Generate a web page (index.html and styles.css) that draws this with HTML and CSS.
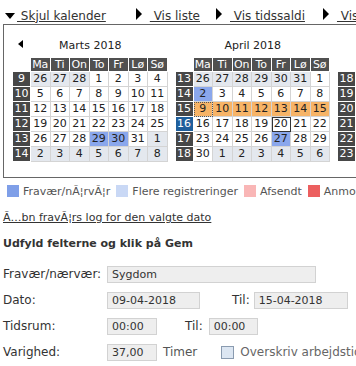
FILE: index.html
```html
<!DOCTYPE html>
<html lang="da">
<head>
<meta charset="utf-8">
<title>Kalender</title>
<link rel="stylesheet" href="styles.css">
</head>
<body>
<div class="nav">
  <div class="nav-item n1"><span class="tri-down"></span><a class="nav-link" href="#">&nbsp;Skjul kalender</a></div>
  <div class="nav-item n2"><span class="tri-right"></span><a class="nav-link" href="#">&nbsp;Vis liste</a></div>
  <div class="nav-item n3"><span class="tri-right"></span><a class="nav-link" href="#">&nbsp;Vis tidssaldi</a></div>
  <div class="nav-item"><span class="tri-right"></span><a class="nav-link" href="#">&nbsp;Vis oversigt</a></div>
</div>

<div class="calbox">
  <div class="cal">
    <div class="cal-title"><span class="tri-left"></span><span class="cal-name">Marts 2018</span><span></span></div>
    <div class="grid">
      <div class="blank"></div><div class="h">Ma</div><div class="h">Ti</div><div class="h">On</div><div class="h">To</div><div class="h">Fr</div><div class="h">Lø</div><div class="h">Sø</div>
      <div class="wk">9</div><div class="c o">26</div><div class="c o">27</div><div class="c o">28</div><div class="c">1</div><div class="c">2</div><div class="c">3</div><div class="c">4</div>
      <div class="wk">10</div><div class="c">5</div><div class="c">6</div><div class="c">7</div><div class="c">8</div><div class="c">9</div><div class="c">10</div><div class="c">11</div>
      <div class="wk">11</div><div class="c">12</div><div class="c">13</div><div class="c">14</div><div class="c">15</div><div class="c">16</div><div class="c">17</div><div class="c">18</div>
      <div class="wk">12</div><div class="c">19</div><div class="c">20</div><div class="c">21</div><div class="c">22</div><div class="c">23</div><div class="c">24</div><div class="c">25</div>
      <div class="wk">13</div><div class="c">26</div><div class="c">27</div><div class="c">28</div><div class="c s">29</div><div class="c s">30</div><div class="c">31</div><div class="c o">1</div>
      <div class="wk">14</div><div class="c o">2</div><div class="c o">3</div><div class="c o">4</div><div class="c o">5</div><div class="c o">6</div><div class="c o">7</div><div class="c o">8</div>
    </div>
  </div>

  <div class="cal">
    <div class="cal-title"><span></span><span class="cal-name">April 2018</span><span></span></div>
    <div class="grid">
      <div class="blank"></div><div class="h">Ma</div><div class="h">Ti</div><div class="h">On</div><div class="h">To</div><div class="h">Fr</div><div class="h">Lø</div><div class="h">Sø</div>
      <div class="wk">13</div><div class="c o">26</div><div class="c o">27</div><div class="c o">28</div><div class="c o">29</div><div class="c o">30</div><div class="c o">31</div><div class="c">1</div>
      <div class="wk">14</div><div class="c s">2</div><div class="c">3</div><div class="c">4</div><div class="c">5</div><div class="c">6</div><div class="c">7</div><div class="c">8</div>
      <div class="wk">15</div><div class="c r dot">9</div><div class="c r">10</div><div class="c r">11</div><div class="c r">12</div><div class="c r">13</div><div class="c r">14</div><div class="c r">15</div>
      <div class="wk cur">16</div><div class="c">16</div><div class="c">17</div><div class="c">18</div><div class="c">19</div><div class="c today">20</div><div class="c">21</div><div class="c">22</div>
      <div class="wk">17</div><div class="c">23</div><div class="c">24</div><div class="c">25</div><div class="c">26</div><div class="c s">27</div><div class="c">28</div><div class="c">29</div>
      <div class="wk">18</div><div class="c">30</div><div class="c o">1</div><div class="c o">2</div><div class="c o">3</div><div class="c o">4</div><div class="c o">5</div><div class="c o">6</div>
    </div>
  </div>

  <div class="cal">
    <div class="cal-title"><span></span><span class="cal-name">Maj 2018</span><span class="tri-right2"></span></div>
    <div class="grid">
      <div class="blank"></div><div class="h">Ma</div><div class="h">Ti</div><div class="h">On</div><div class="h">To</div><div class="h">Fr</div><div class="h">Lø</div><div class="h">Sø</div>
      <div class="wk">18</div><div class="c o">30</div><div class="c">1</div><div class="c">2</div><div class="c">3</div><div class="c">4</div><div class="c">5</div><div class="c">6</div>
      <div class="wk">19</div><div class="c">7</div><div class="c">8</div><div class="c">9</div><div class="c">10</div><div class="c">11</div><div class="c">12</div><div class="c">13</div>
      <div class="wk">20</div><div class="c">14</div><div class="c">15</div><div class="c">16</div><div class="c">17</div><div class="c">18</div><div class="c">19</div><div class="c">20</div>
      <div class="wk">21</div><div class="c s">21</div><div class="c">22</div><div class="c">23</div><div class="c">24</div><div class="c">25</div><div class="c">26</div><div class="c">27</div>
      <div class="wk">22</div><div class="c">28</div><div class="c">29</div><div class="c">30</div><div class="c">31</div><div class="c o">1</div><div class="c o">2</div><div class="c o">3</div>
      <div class="wk">23</div><div class="c o">4</div><div class="c o">5</div><div class="c o">6</div><div class="c o">7</div><div class="c o">8</div><div class="c o">9</div><div class="c o">10</div>
    </div>
  </div>
</div>

<div class="legend">
  <span class="sq sq-blue"></span><span class="lg-text">Fravær/nÃ¦rvÃ¦r</span>
  <span class="sq sq-light"></span><span class="lg-text">Flere registreringer</span>
  <span class="sq sq-pink"></span><span class="lg-text">Afsendt</span>
  <span class="sq sq-red"></span><span class="lg-text">Anmodet</span>
</div>

<a class="log-link" href="#">Ã…bn fravÃ¦rs log for den valgte dato</a>

<div class="heading">Udfyld felterne og klik på Gem</div>

<div class="form">
  <div class="row"><span class="lbl">Fravær/nærvær:</span><input class="inp w-long" type="text" value="Sygdom" readonly></div>
  <div class="row"><span class="lbl">Dato:</span><input class="inp w-date" type="text" value="09-04-2018" readonly><span class="til til-date">Til:</span><input class="inp w-date2" type="text" value="15-04-2018" readonly></div>
  <div class="row"><span class="lbl">Tidsrum:</span><input class="inp w-time" type="text" value="00:00" readonly><span class="til til-time">Til:</span><input class="inp w-time2" type="text" value="00:00" readonly></div>
  <div class="row"><span class="lbl">Varighed:</span><input class="inp w-time" type="text" value="37,00" readonly><span class="unit">Timer</span><span class="chk"></span><span class="chk-label">Overskriv arbejdstid</span></div>
</div>
</body>
</html>
```
FILE: styles.css
```css
* { box-sizing: border-box; }
html, body { margin: 0; padding: 0; overflow: hidden; }
body {
  width: 356px;
  height: 366px;
  background: #fff;
  color: #333;
  font-family: "DejaVu Sans", Verdana, sans-serif;
}

/* top navigation */
.nav {
  display: flex;
  height: 24px;
  padding: 7px 0 0 5px;
  white-space: nowrap;
  overflow: hidden;
  font-size: 12px;
  line-height: 14px;
}
.nav-item {
  display: flex;
  align-items: center;
  margin-right: 26px;
  flex-shrink: 0;
}
.nav-item.n1 { margin-right: 30px; }
.nav-item.n2 { margin-right: 16px; }
.nav-item.n3 { margin-right: 18px; }
.nav-link { color: #333; text-decoration: underline; }
.tri-down {
  width: 0; height: 0;
  border-left: 5px solid transparent;
  border-right: 5px solid transparent;
  border-top: 6px solid #000;
  margin-right: 2px;
  margin-top: 1px;
}
.tri-right {
  width: 0; height: 0;
  border-top: 6px solid transparent;
  border-bottom: 6px solid transparent;
  border-left: 6px solid #000;
  margin-right: 8px;
  margin-top: -3px;
}

/* calendar strip */
.calbox {
  margin-left: 3px;
  width: 600px;
  border-top: 1px solid #666;
  border-left: 1px solid #666;
  border-bottom: 1px solid #666;
  padding: 14px 0 15px 9px;
  display: flex;
  gap: 8px;
}
.cal { width: 154.5px; flex-shrink: 0; }
.cal-title {
  display: grid;
  grid-template-columns: 18px 1fr 18px;
  align-items: center;
  height: 14px;
  font-size: 11px;
  line-height: 14px;
  color: #222;
}
.cal-name { text-align: center; }
.tri-left {
  width: 0; height: 0;
  border-top: 4px solid transparent;
  border-bottom: 4px solid transparent;
  border-right: 5px solid #000;
  margin-left: 5px;
  margin-top: -4px;
}
.tri-right2 {
  width: 0; height: 0;
  border-top: 4px solid transparent;
  border-bottom: 4px solid transparent;
  border-left: 5px solid #000;
  margin-left: 8px;
  margin-top: -4px;
}
.grid {
  margin-top: 5px;
  display: grid;
  grid-template-columns: 18px repeat(7, 19.5px);
  grid-template-rows: 14px repeat(6, 15px);
  font-size: 11px;
  line-height: 12px;
}
.grid > div {
  display: flex;
  align-items: center;
  justify-content: center;
}
.blank { background: #fff; }
.h {
  background: #505050;
  color: #fff;
  border-right: 1px solid #fff;
  border-bottom: 1px solid #fff;
}
.wk {
  background: #474747;
  color: #fff;
  border-right: 1px solid #fff;
  border-bottom: 1px solid #fff;
}
.wk.cur { background: #1f5f9c; }
.c {
  background: #fff;
  color: #222;
  border-right: 1px solid #d4d4d4;
  border-bottom: 1px solid #d4d4d4;
}
.c.o { background: #e4e8ee; }
.c.s { background: #8aa7ec; }
.c.r { background: #f7b467; }
.c.dot { outline: 1px dotted #555; outline-offset: -1px; }
.c.today { outline: 1.5px solid #333; outline-offset: -1.5px; }

/* legend */
.legend {
  display: flex;
  align-items: center;
  margin-top: 6px;
  padding-left: 7px;
  height: 14px;
  font-size: 11px;
  color: #555;
  white-space: nowrap;
  overflow: hidden;
}
.sq { width: 12px; height: 12px; flex-shrink: 0; margin-right: 4px; }
.sq-blue { background: #7f9fe8; }
.sq-light { background: #c9d8f5; }
.sq-pink { background: #f9b6b6; }
.sq-red { background: #ec5f5f; }
.lg-text { margin-right: 6px; flex-shrink: 0; }

.log-link {
  display: block;
  margin: 13px 0 0 3px;
  font-size: 11px;
  line-height: 14px;
  color: #333;
  text-decoration: underline;
}

.heading {
  margin: 12px 0 0 3px;
  font-size: 11px;
  line-height: 14px;
  font-weight: bold;
  color: #333;
}

/* form */
.form { margin-top: 10px; padding-left: 3px; }
.row {
  display: flex;
  align-items: center;
  height: 26px;
  font-size: 12px;
  white-space: nowrap;
}
.lbl { width: 104px; flex-shrink: 0; color: #333; }
.inp {
  height: 17px;
  padding: 0 4px;
  border: 1px solid #d2d2d2;
  background: #eeeeee;
  font-family: "DejaVu Sans", Verdana, sans-serif;
  font-size: 11px;
  color: #333;
  outline: none;
  flex-shrink: 0;
}
.w-long { width: 209px; }
.w-date { width: 93px; }
.w-date2 { width: 94px; }
.w-time { width: 50px; }
.w-time2 { width: 49px; }
.til { color: #333; }
.til-date { margin: 0 4px 0 32px; }
.til-time { margin: 0 6px 0 28px; }
.unit { margin-left: 6px; font-size: 12px; color: #555; }
.chk {
  width: 13px;
  height: 13px;
  margin-left: 24px;
  border: 1px solid #8a9bb0;
  background: #dce6f2;
  flex-shrink: 0;
}
.chk-label { margin-left: 6px; font-size: 12px; color: #666; flex-shrink: 0; }
```
